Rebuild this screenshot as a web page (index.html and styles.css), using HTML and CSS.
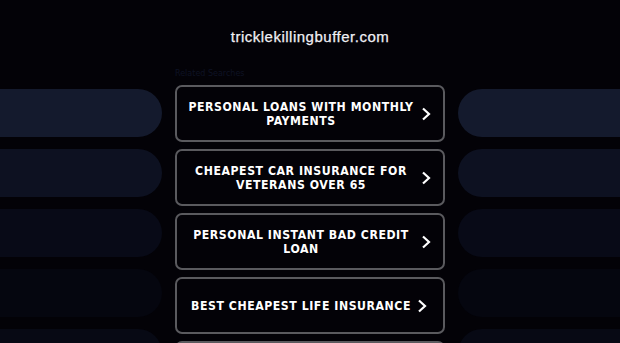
FILE: index.html
```html
<!DOCTYPE html>
<html>
<head>
<meta charset="utf-8">
<link rel="stylesheet" href="styles.css">
</head>
<body>
<header class="header">
  <h1 class="domain">tricklekillingbuffer.com</h1>
</header>
<main class="layout">
  <div class="side side-left">
    <div class="pill p1"></div>
    <div class="pill p2"></div>
    <div class="pill p3"></div>
    <div class="pill p4"></div>
    <div class="pill p5"></div>
  </div>
  <div class="center">
    <div class="label">Related Searches</div>
    <div class="cards">
      <a class="card" href="#"><span class="card-text">PERSONAL LOANS WITH MONTHLY PAYMENTS</span><svg class="chev" viewBox="0 0 10 14" width="10" height="14"><path d="M2 1.5 L8 7 L2 12.5" fill="none" stroke="#fff" stroke-width="2.2"/></svg></a>
      <a class="card" href="#"><span class="card-text">CHEAPEST CAR INSURANCE FOR VETERANS OVER 65</span><svg class="chev" viewBox="0 0 10 14" width="10" height="14"><path d="M2 1.5 L8 7 L2 12.5" fill="none" stroke="#fff" stroke-width="2.2"/></svg></a>
      <a class="card" href="#"><span class="card-text">PERSONAL INSTANT BAD CREDIT LOAN</span><svg class="chev" viewBox="0 0 10 14" width="10" height="14"><path d="M2 1.5 L8 7 L2 12.5" fill="none" stroke="#fff" stroke-width="2.2"/></svg></a>
      <a class="card" href="#"><span class="card-text">BEST CHEAPEST LIFE INSURANCE</span><svg class="chev" viewBox="0 0 10 14" width="10" height="14"><path d="M2 1.5 L8 7 L2 12.5" fill="none" stroke="#fff" stroke-width="2.2"/></svg></a>
      <a class="card" href="#"><span class="card-text">CHEAP HEALTH INSURANCE</span><svg class="chev" viewBox="0 0 10 14" width="10" height="14"><path d="M2 1.5 L8 7 L2 12.5" fill="none" stroke="#fff" stroke-width="2.2"/></svg></a>
    </div>
  </div>
  <div class="side side-right">
    <div class="pill p1"></div>
    <div class="pill p2"></div>
    <div class="pill p3"></div>
    <div class="pill p4"></div>
    <div class="pill p5"></div>
  </div>
</main>
</body>
</html>
```

FILE: styles.css
```css
html, body {
  margin: 0;
  padding: 0;
  background: #030207;
  height: 343px;
  overflow: hidden;
}
body {
  font-family: "DejaVu Sans", sans-serif;
  color: #fff;
}
.header {
  height: 68px;
  padding-top: 28px;
  box-sizing: border-box;
  text-align: center;
}
.domain {
  margin: 0;
  font-family: "Liberation Sans", Arial, sans-serif;
  font-size: 15px;
  font-weight: normal;
  letter-spacing: 0.5px;
  line-height: 18px;
  color: #f0f0f4;
  -webkit-text-stroke: 0.25px #f0f0f4;
}
.layout {
  display: flex;
  gap: 13px;
}
.side {
  width: 162px;
  flex: none;
  padding-top: 21px;
  display: flex;
  flex-direction: column;
  gap: 12px;
}
.pill {
  height: 48px;
  flex: none;
}
.side-left .pill { border-radius: 0 24px 24px 0; }
.side-right .pill { border-radius: 24px 0 0 24px; }
.p1 { background: #141a2d; }
.p2 { background: #0d1121; }
.p3 { background: #080a17; }
.p4 { background: #05060f; }
.p5 { background: #070914; }
.center {
  width: 270px;
  flex: none;
}
.label {
  height: 17px;
  font-size: 8px;
  line-height: 10px;
  padding-top: 1px;
  color: #0e1224;
  box-sizing: border-box;
}
.cards {
  display: flex;
  flex-direction: column;
  gap: 7px;
}
.card {
  height: 57px;
  box-sizing: border-box;
  border: 2px solid #5a5a5e;
  border-radius: 7px;
  display: flex;
  align-items: center;
  justify-content: center;
  gap: 6px;
  padding: 0 12px 0 10px;
  text-decoration: none;
  color: #fff;
}
.card-text {
  text-align: center;
  font-family: "DejaVu Sans Condensed", "DejaVu Sans", sans-serif;
  font-stretch: condensed;
  font-weight: bold;
  font-size: 12.2px;
  letter-spacing: 0.55px;
  line-height: 14px;
}
.chev {
  flex: none;
}
```
